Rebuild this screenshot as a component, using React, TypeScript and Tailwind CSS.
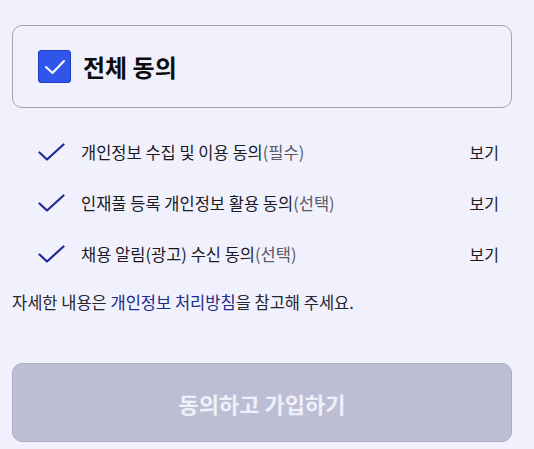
import React from "react";

const terms = [
  { label: "개인정보 수집 및 이용 동의", tag: "(필수)" },
  { label: "인재풀 등록 개인정보 활용 동의", tag: "(선택)" },
  { label: "채용 알림(광고) 수신 동의", tag: "(선택)" },
];

function Check() {
  return (
    <svg width="27" height="18" viewBox="0 0 27 18" fill="none">
      <path d="M1.5 9.5 L9 16.5 L25.5 1.5" stroke="#1d2a94" strokeWidth="2.2" strokeLinecap="round" strokeLinejoin="round" />
    </svg>
  );
}

export default function App() {
  return (
    <div
      className="min-h-screen bg-[#f1f1fd] pl-3 pr-[22px] pt-[25px] text-[#1a1a1f]"
      style={{ fontFamily: '"Noto Sans CJK KR", "Noto Sans", sans-serif' }}
    >
      {/* 전체 동의 */}
      <div className="flex h-[83px] items-center gap-[12px] rounded-[10px] border border-[#a3a3b4] pl-[25px]">
        <div className="flex h-[33px] w-[33px] items-center justify-center rounded-[3px] border border-[#1f3cc4] bg-[#2f55ea]">
          <svg width="22" height="16" viewBox="0 0 22 16" fill="none">
            <path d="M2 8 L8.5 14 L20 2" stroke="white" strokeWidth="2" strokeLinecap="round" strokeLinejoin="round" />
          </svg>
        </div>
        <span className="text-[24px] font-bold leading-none text-[#0d0d10]">전체 동의</span>
      </div>

      {/* 약관 목록 */}
      <ul className="mt-[18px]">
        {terms.map((t) => (
          <li key={t.label} className="flex h-[51px] items-center pl-[26px] pr-[13px]">
            <Check />
            <span className="ml-[16px] flex-1 text-[16.5px] leading-[22px]">
              {t.label}
              <span className="text-[#5a5a66]">{t.tag}</span>
            </span>
            <span className="text-[16px] leading-[22px]">보기</span>
          </li>
        ))}
      </ul>

      <p className="mt-[12px] text-[16.5px] leading-[22px] text-[#26262c]">
        자세한 내용은 <span className="text-[#1e2a8c]">개인정보 처리방침</span>을 참고해 주세요.
      </p>

      <button className="mt-[50px] flex h-[79px] w-full items-center justify-center rounded-[10px] border border-[#adaec4] bg-[#bdbed3] text-[22px] font-bold leading-none text-[#eef0fa]">
        동의하고 가입하기
      </button>
    </div>
  );
}
